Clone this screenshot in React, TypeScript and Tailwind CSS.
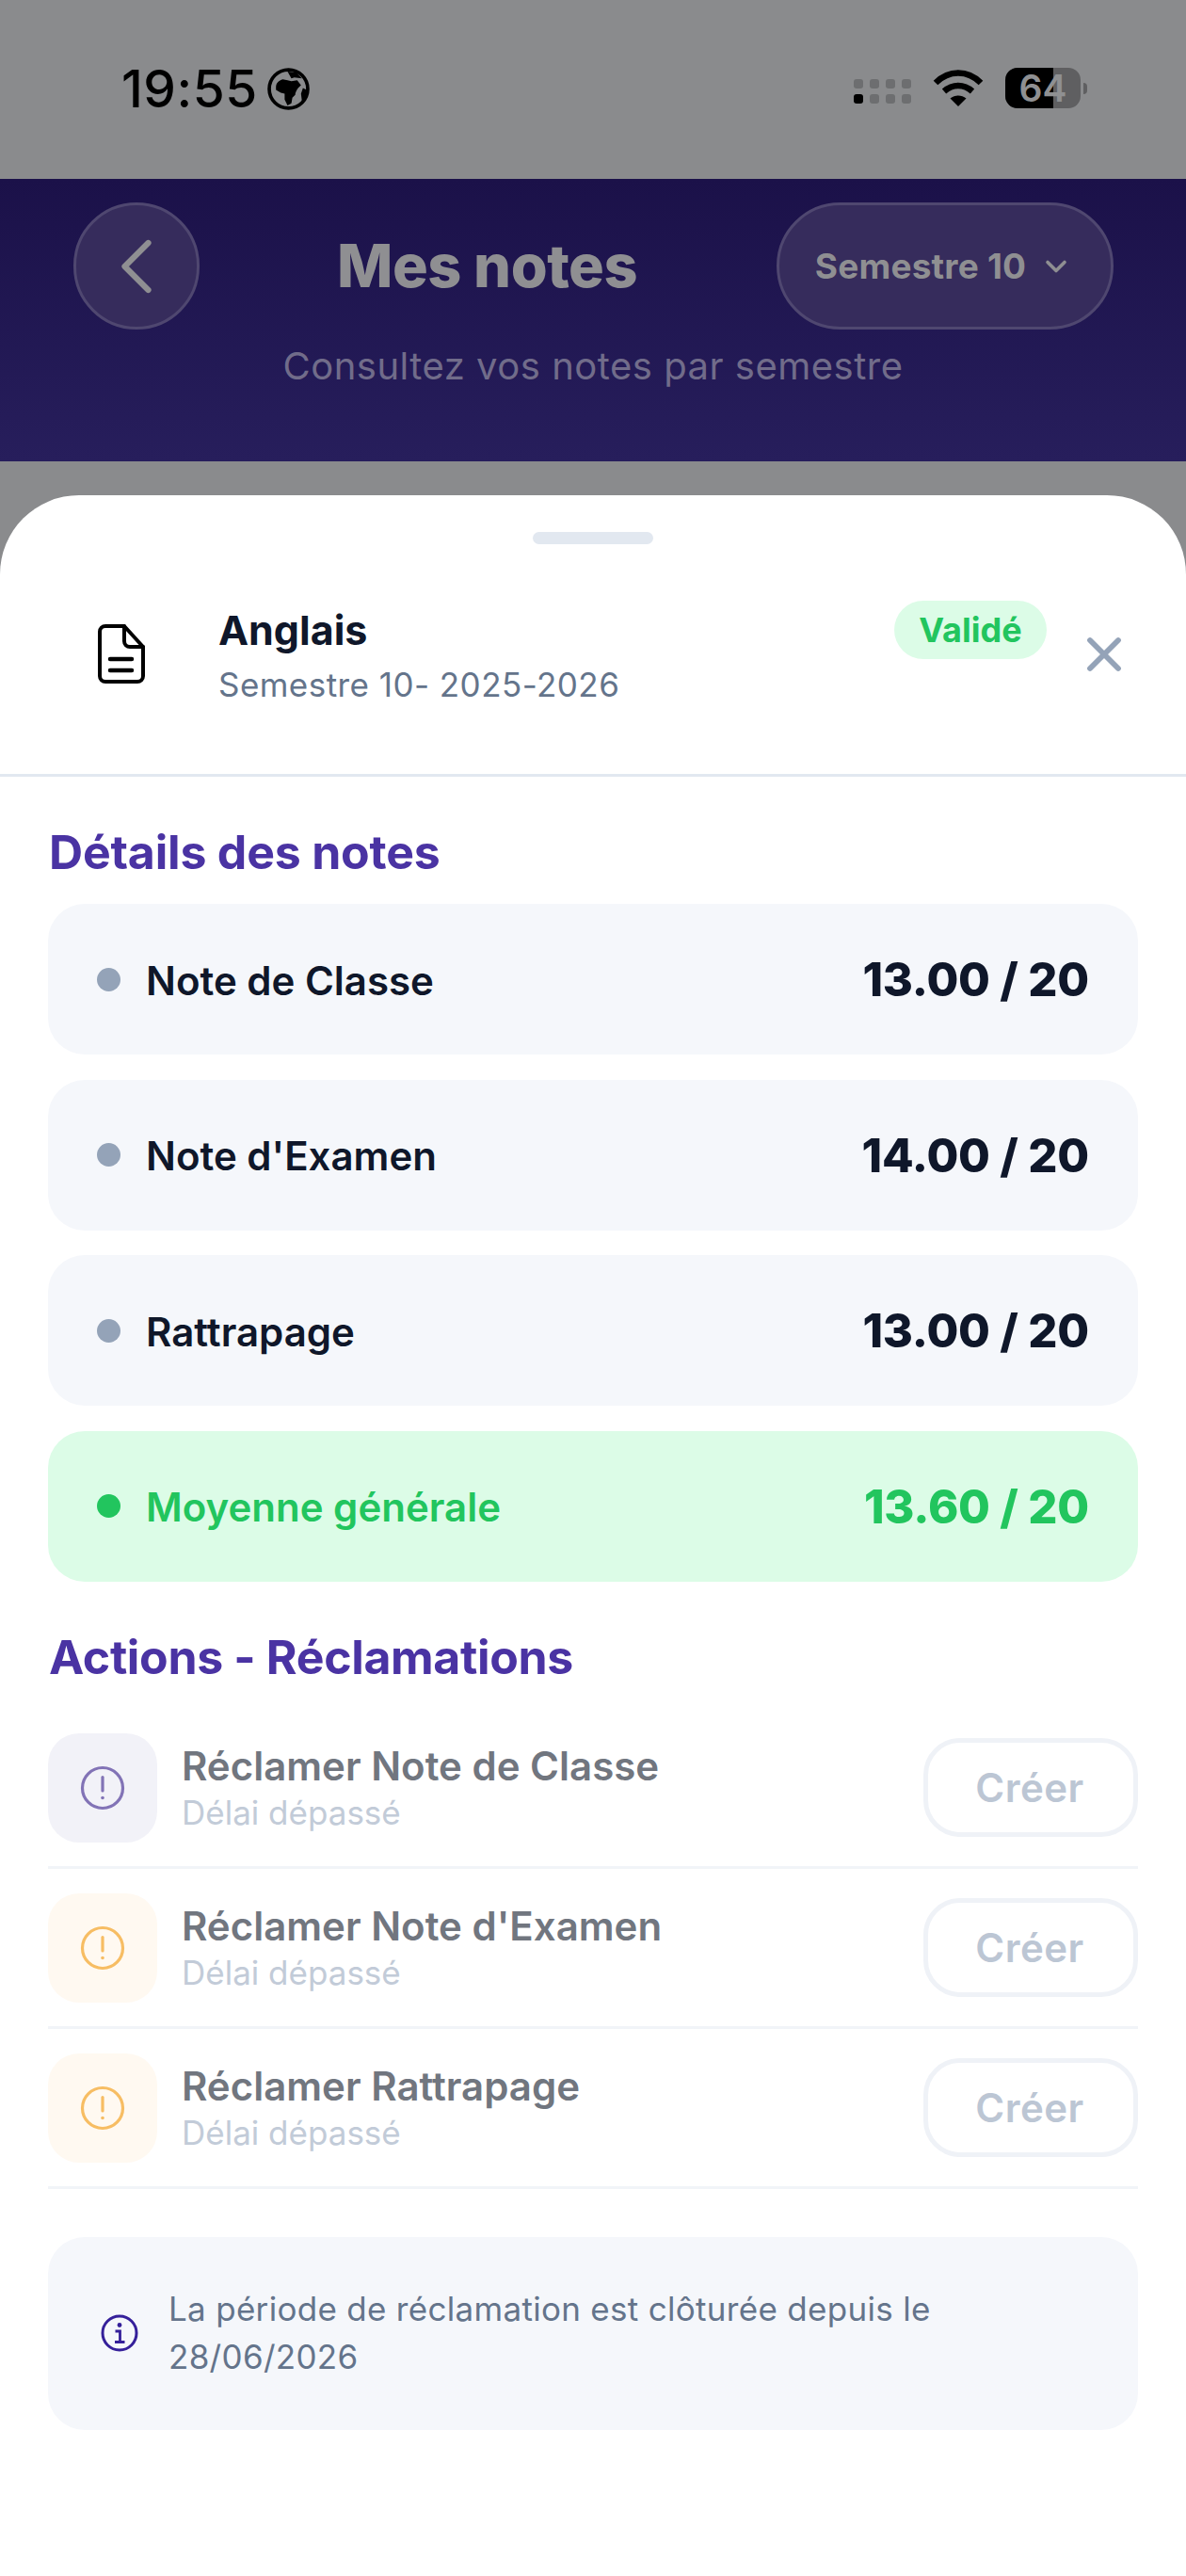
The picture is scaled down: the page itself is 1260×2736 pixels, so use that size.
import React from "react";
import { ChevronLeft, ChevronDown, X } from "lucide-react";

const Alert = ({ color }: { color: string }) => (
  <svg width="48" height="48" viewBox="0 0 48 48" fill="none" stroke={color} strokeWidth="3.2" strokeLinecap="round">
    <circle cx="24" cy="24" r="21.5" />
    <path d="M24 12.5V27" />
    <circle cx="24" cy="34.5" r="1.8" fill={color} stroke="none" />
  </svg>
);

const Row = ({ title, purple }: { title: string; purple?: boolean }) => (
  <div className="flex items-center pb-[25px] border-b-[3px] border-[#f1f4f8]">
    <div className={`flex items-center justify-center w-[116px] h-[116px] rounded-[33px] ${purple ? "bg-[#f2f2f8]" : "bg-[#fff9f1]"}`}>
      <Alert color={purple ? "#8273b6" : "#f7bd63"} />
    </div>
    <div className="flex-1 ml-[26px] flex flex-col pt-[1px]">
      <span className="text-[42px] leading-[52px] font-semibold text-[#71767f]">{title}</span>
      <span className="text-[35px] leading-[46px] text-[#c2cbd8]">Délai dépassé</span>
    </div>
    <div className="flex items-center justify-center w-[228px] h-[105px] pr-[2px] rounded-[39px] border-[5px] border-[#eff2f7] text-[42px] font-semibold text-[#bcc6d4] tracking-[0.5px]">
      Créer
    </div>
  </div>
);

const Note = ({ label, value, green }: { label: string; value: string; green?: boolean }) => (
  <div className={`flex items-center h-[160px] pl-[52px] pr-[52px] rounded-[39px] ${green ? "bg-[#dcfce7]" : "bg-[#f5f7fb]"}`}>
    <span className={`w-[25px] h-[25px] rounded-full ${green ? "bg-[#22c55e]" : "bg-[#94a3b8]"}`} />
    <span className={`ml-[27px] flex-1 text-[42px] leading-[52px] pt-[3px] font-semibold ${green ? "text-[#22c55e]" : "text-[#0f172a]"}`}>{label}</span>
    <span className={`text-[49px] leading-[60px] pt-[2px] font-extrabold tracking-[-0.2px] ${green ? "text-[#22c55e]" : "text-[#0f172a]"}`}>{value}</span>
  </div>
);

export default function App() {
  return (
    <div className="w-[1260px] h-[2736px] overflow-hidden bg-[#8a8b8d] flex flex-col font-['Inter',sans-serif]">
      {/* status bar */}
      <div className="h-[190px] shrink-0 flex items-start justify-between pl-[129px] pr-[105px] pt-[64px]">
        <div className="flex items-center gap-[10px] h-[60px]">
          <span className="text-[55px] leading-[60px] font-medium text-black tracking-[0.5px]">19:55</span>
          <svg width="45" height="45" viewBox="0 0 44 44">
            <circle cx="22" cy="22" r="20" fill="none" stroke="#000" strokeWidth="3.6" />
            <path d="M9 20c0-4 3-7 7-8l5 1 4 1 6-1 4 5-3 3c-2 3-3 5-3 7l-3 3-1 6-4 2-3-6v-6l-4-1-5-3z" fill="#000" />
            <path d="M21 4l9 1 6 6-8-1-3 1zM37 21l4 2-1 8-4 4-1-8z" fill="#000" />
          </svg>
        </div>
        <div className="flex items-center gap-[23px] pt-[8px]">
          <div className="grid grid-cols-4 gap-x-[7px] gap-y-[6px] mt-[6px] -ml-[3px]">
            {[0, 1, 2, 3, 4, 5, 6, 7].map((i) => (
              <span key={i} className={`w-[10px] h-[10px] rounded-[3px] ${i === 4 ? "bg-black" : "bg-[#6d6e70]"}`} />
            ))}
          </div>
          <svg width="54" height="40" viewBox="0 0 54 40" fill="none" stroke="#000" strokeWidth="6.5">
            <path d="M3 14C17 0 37 0 51 14" />
            <path d="M12 23c9-8 21-8 30 0" />
            <path d="M27 39l-8.500-8.500c5-4 12-4 17 0z" fill="#000" stroke="none" />
          </svg>
          <div className="flex items-center">
            <div className="relative w-[80px] h-[43px] rounded-[13px] bg-[#5f5f61] flex items-center justify-center">
              <div className="absolute left-0 top-0 bottom-0 w-[51px] bg-black rounded-l-[13px]" />
              <span className="relative text-[39px] leading-none font-semibold text-[#8f9092]">64</span>
            </div>
            <div className="w-[4px] h-[12px] ml-[3px] bg-[#5f5f61] rounded-r-full" />
          </div>
        </div>
      </div>

      {/* header */}
      <div className="h-[300px] shrink-0 bg-gradient-to-b from-[#1b1149] to-[#271e5c] px-[78px] pt-[25px]">
        <div className="flex items-center justify-between">
          <div className="flex items-center justify-center w-[134px] h-[135px] rounded-full bg-[#362c5c] border-[3px] border-[#4f4770] text-[#8f8f92]">
            <ChevronLeft size={100} strokeWidth={1.5} />
          </div>
          <span className="text-[63px] font-extrabold text-[#8f8f92] -ml-[2px] tracking-[-0.5px]">Mes notes</span>
          <div className="flex items-center justify-center gap-[14px] w-[358px] h-[135px] rounded-full bg-[#362c5c] border-[3px] border-[#4f4770] text-[#8f8f92] -mr-[1px]">
            <span className="text-[37px] font-bold tracking-[0.2px] -ml-[2px]">Semestre 10</span>
            <ChevronDown size={36} strokeWidth={2.4} />
          </div>
        </div>
        <p className="text-center text-[40px] leading-[48px] text-[#716c8a] mt-[15px] tracking-[0.5px]">Consultez vos notes par semestre</p>
      </div>

      {/* sheet */}
      <div className="mt-[36px] flex-1 bg-white rounded-t-[84px]">
        <div className="w-[128px] h-[13px] rounded-full bg-[#e2e8f0] mx-auto mt-[39px]" />
        <div className="flex h-[247px] border-b-[3px] border-[#e2e8f0] pl-[104px] pr-[57px]">
          <svg width="50" height="63" viewBox="0 0 50 63" fill="none" stroke="#000" strokeWidth="4" strokeLinejoin="round" strokeLinecap="round" className="mt-[85px]">
            <path d="M8 2h20l20 22v31a6 6 0 0 1-6 6H8a6 6 0 0 1-6-6V8a6 6 0 0 1 6-6z" />
            <path d="M28 2v16a6 6 0 0 0 6 6h14" />
            <path d="M13 37h23M13 49h23" strokeWidth="4.500" />
          </svg>
          <div className="ml-[78px] mt-[66px] flex-1">
            <div className="text-[43px] leading-[50px] font-bold text-[#0f172a]">Anglais</div>
            <div className="text-[35px] leading-[42px] text-[#64748b] mt-[12px] tracking-[0.45px]">Semestre 10- 2025-2026</div>
          </div>
          <div className="mt-[60px] h-[62px] w-[162px] rounded-full bg-[#dcfce7] flex items-center justify-center text-[36px] font-bold text-[#22c55e]">Validé</div>
          <X size={60} strokeWidth={2.3} className="text-[#94a3b8] mt-[87px] ml-[31px]" />
        </div>

        <div className="px-[51px]">
          <h2 className="text-[50px] leading-[60px] font-bold text-[#4a33a3] mt-[50px] ml-[1px] tracking-[-0.2px]">Détails des notes</h2>
          <div className="flex flex-col gap-[26.500px] mt-[25px]">
            <Note label="Note de Classe" value="13.00 / 20" />
            <Note label="Note d'Examen" value="14.00 / 20" />
            <Note label="Rattrapage" value="13.00 / 20" />
            <Note label="Moyenne générale" value="13.60 / 20" green />
          </div>
          <h2 className="text-[50px] leading-[60px] font-bold text-[#4a33a3] mt-[50px] ml-[1px] tracking-[-0.35px]">Actions - Réclamations</h2>
          <div className="flex flex-col gap-[26px] mt-[51px]">
            <Row title="Réclamer Note de Classe" purple />
            <Row title="Réclamer Note d'Examen" />
            <Row title="Réclamer Rattrapage" />
          </div>
          <div className="flex items-center h-[205px] mt-[51px] rounded-[39px] bg-[#f5f7fb] pl-[56px] pr-[52px]">
            <svg width="40" height="40" viewBox="0 0 40 40" fill="none" stroke="#35209a" strokeWidth="3" className="shrink-0">
              <circle cx="20" cy="20" r="18" />
              <circle cx="20" cy="11.500" r="2.400" fill="#35209a" stroke="none" />
              <path d="M15.500 18H20.500V29M15 29.500H25.500" strokeWidth="2.800" />
            </svg>
            <p className="ml-[32px] text-[35px] leading-[51px] text-[#64748b] tracking-[0.3px]">La période de réclamation est clôturée depuis le 28/06/2026</p>
          </div>
        </div>
      </div>
    </div>
  );
}
